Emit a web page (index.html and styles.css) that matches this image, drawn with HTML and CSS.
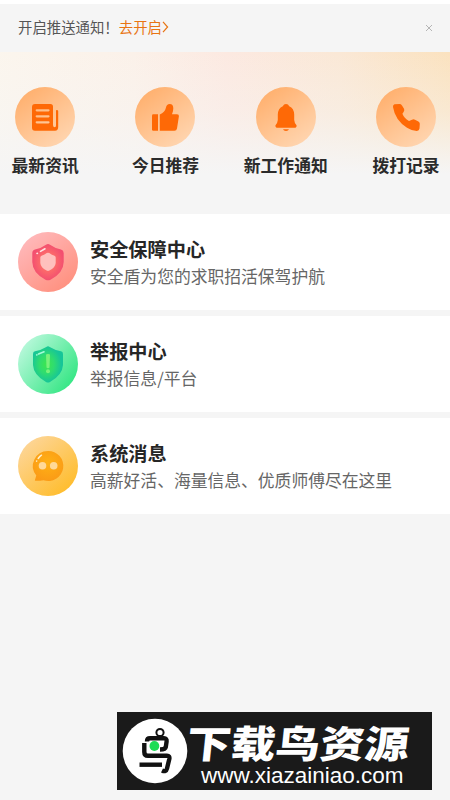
FILE: index.html
```html
<!DOCTYPE html>
<html lang="zh-CN">
<head>
  <meta charset="UTF-8">
  <meta name="viewport" content="width=device-width, initial-scale=1.0">
  <title>消息</title>
  <link rel="stylesheet" href="styles.css">
</head>
<body>

  <div class="notice">
    <span>开启推送通知！</span><a class="notice-link" href="#">去开启<svg width="7" height="12" viewBox="0 0 7 12"><path d="M1 .8L5.6 6L1 11.2" fill="none" stroke="#e87413" stroke-width="1.2"/></svg></a>
    <svg class="close" width="8" height="8" viewBox="0 0 8 8"><path d="M1 1L7 7M7 1L1 7" stroke="#b5b5b5" stroke-width="1"/></svg>
  </div>

  <div class="menu">
    <a class="menu-item" href="#">
      <div class="circle">
        <svg width="60" height="60" viewBox="0 0 60 60" fill="#fe6906">
          <path fill-rule="evenodd" d="M20 17H35.5Q38 17 38 19.5V38Q38 40.2 39.8 40.2Q41 40.2 41 38.5V23.5Q41 23 41.8 23Q43.2 23 43.2 24.2V40Q43.2 43.7 40 43.7H20Q17 43.7 17 40.7V20Q17 17 20 17ZM21.7 22.2A1 1 0 0 0 21.7 24.4H33.5A1 1 0 0 0 33.5 22.2ZM21.7 28.2A1 1 0 0 0 21.7 30.4H33.5A1 1 0 0 0 33.5 28.2ZM21.7 34.2A1 1 0 0 0 21.7 36.4H33.5A1 1 0 0 0 33.5 34.2Z"/>
        </svg>
      </div>
      <span>最新资讯</span>
    </a>
    <a class="menu-item" href="#">
      <div class="circle">
        <svg width="60" height="60" viewBox="0 0 60 60" fill="#fe6906">
          <path d="M18.3 27.2H23V43.7H18.3Q17 43.7 17 42.4V28.5Q17 27.2 18.3 27.2Z"/>
          <path d="M24.8 27.4Q29.8 25.8 31 20.5Q31.5 17 34.7 17Q38.3 17 38.3 21.3Q38.3 24.5 37 27.2H42Q44.2 27.2 43.9 29.3L42 41.5Q41.6 43.7 39.4 43.7H24.8Z"/>
        </svg>
      </div>
      <span>今日推荐</span>
    </a>
    <a class="menu-item" href="#">
      <div class="circle">
        <svg width="60" height="60" viewBox="0 0 60 60" fill="#fe6906">
          <path d="M30 17Q32.3 17 33.2 19.2Q38 21.3 38.2 27.5V33Q38.4 36 40.5 38.3Q41 39.5 40 40.2Q39.6 40.8 38.5 40.8H21.5Q20.4 40.8 20 40.2Q19 39.5 19.5 38.3Q21.6 36 21.8 33V27.5Q22 21.3 26.8 19.2Q27.7 17 30 17Z"/>
          <path d="M27 42.2H33Q32.3 44 30 44Q27.7 44 27 42.2Z"/>
        </svg>
      </div>
      <span>新工作通知</span>
    </a>
    <a class="menu-item" href="#">
      <div class="circle">
        <svg width="60" height="60" viewBox="0 0 60 60" fill="#fe6906">
          <path d="M18.5 17.2L23.5 17Q25 17 26 18.4L28 21.8Q28.8 23.4 27.6 25L26.4 26.7Q28 31 33 34L36 32.8Q37.5 32 39 32.7L42.4 34.4Q43.8 35.3 43.8 36.8L43.5 41.5Q43.2 43.8 40.8 44Q36 44 31 40.8Q19 33 17 20Q16.8 17.8 18.5 17.2Z"/>
        </svg>
      </div>
      <span>拨打记录</span>
    </a>
  </div>

  <div class="list">
    <div class="card">
      <svg width="60" height="60" viewBox="0 0 60 60">
        <defs>
          <linearGradient id="redBg" x1="0.1" y1="0.1" x2="0.8" y2="1"><stop offset="0" stop-color="#ffb9bb"/><stop offset="1" stop-color="#ff8f7d"/></linearGradient>
          <radialGradient id="redShield"><stop offset="0.3" stop-color="#ff7468"/><stop offset="1" stop-color="#f34f70"/></radialGradient>
        </defs>
        <circle cx="30" cy="30" r="30" fill="url(#redBg)"/>
        <path d="M28 12.7Q30 11.3 32 12.7Q36.5 16 43 17.5Q45.7 18.2 45.7 21V30Q45.5 41 32.5 47.7Q30 49 27.5 47.7Q14.5 41 14.3 30V21Q14.3 18.2 17 17.5Q23.5 16 28 12.7Z" fill="url(#redShield)"/>
        <path d="M28.8 21.1Q30 20.3 31.2 21.1Q34 23 36.5 23.8Q37.7 24.2 37.7 25.5V31Q37.3 35.5 31.4 38.6Q30 39.3 28.6 38.6Q22.7 35.5 22.3 31V25.5Q22.3 24.2 23.5 23.8Q26 23 28.8 21.1Z" fill="#ffc0bd"/>
        <path d="M22.5 19.4L27 16.8M19 21.5L19.4 21.3" stroke="#ffe3e2" stroke-width="1.6" stroke-linecap="round"/>
      </svg>
      <div class="card-text">
        <div class="card-title">安全保障中心</div>
        <div class="card-desc">安全盾为您的求职招活保驾护航</div>
      </div>
    </div>

    <div class="card">
      <svg width="60" height="60" viewBox="0 0 60 60">
        <defs>
          <linearGradient id="greenBg" x1="0.05" y1="0.2" x2="0.9" y2="0.85"><stop offset="0" stop-color="#b9f8db"/><stop offset="1" stop-color="#35e684"/></linearGradient>
          <radialGradient id="greenShield" cx="0.45" cy="0.5"><stop offset="0" stop-color="#3de64f"/><stop offset="0.5" stop-color="#2fdc70"/><stop offset="1" stop-color="#16c598"/></radialGradient>
        </defs>
        <circle cx="30" cy="30" r="30" fill="url(#greenBg)"/>
        <path d="M28.3 13Q30 11.7 31.7 13Q37 16.3 43 17.2Q45 17.5 45 20V31Q44.5 41 32 48Q30 49 28 48Q15.5 41 15 31V20Q15 17.5 17 17.2Q23 16.3 28.3 13Z" fill="url(#greenShield)"/>
        <path d="M28 20.8Q28 20 30 20Q32 20 32 20.8L31.5 33.5Q31.3 34.2 30 34.2Q28.7 34.2 28.5 33.5Z" fill="#79f27c"/>
        <circle cx="30" cy="37.2" r="2" fill="#79f27c"/>
        <path d="M20.5 20L26 17.8M18.7 21L18.9 20.9" stroke="#a6fbd8" stroke-width="1.6" stroke-linecap="round"/>
      </svg>
      <div class="card-text">
        <div class="card-title">举报中心</div>
        <div class="card-desc">举报信息/平台</div>
      </div>
    </div>

    <div class="card">
      <svg width="60" height="60" viewBox="0 0 60 60">
        <defs>
          <linearGradient id="yellowBg" x1="0.15" y1="0.1" x2="0.85" y2="0.9"><stop offset="0" stop-color="#fdd596"/><stop offset="1" stop-color="#ffbd2d"/></linearGradient>
          <radialGradient id="bubble" cx="0.5" cy="0.4" r="0.6"><stop offset="0" stop-color="#ffb115"/><stop offset="1" stop-color="#fb9b16"/></radialGradient>
        </defs>
        <circle cx="30" cy="30" r="30" fill="url(#yellowBg)"/>
        <path d="M30 15A15 15 0 1 1 25.5 44.2Q21.5 45 17.4 44.8Q16.5 44.6 17 43.8L18.3 39.5A15 15 0 0 1 30 15Z" fill="url(#bubble)"/>
        <circle cx="24.5" cy="29.7" r="3.8" fill="#ffd998"/>
        <circle cx="35.7" cy="29.7" r="3.8" fill="#ffd998"/>
        <path d="M20.2 22.5Q21.5 20.5 23.5 19.2M18.6 25.2L18.7 25" fill="none" stroke="#fff0cc" stroke-width="1.5" stroke-linecap="round"/>
      </svg>
      <div class="card-text">
        <div class="card-title">系统消息</div>
        <div class="card-desc">高薪好活、海量信息、优质师傅尽在这里</div>
      </div>
    </div>
  </div>

  <div class="banner">
    <svg width="66" height="66" viewBox="0 0 66 66">
      <circle cx="33" cy="33" r="32.3" fill="#fff"/>
      <g fill="none" stroke="#111" stroke-width="4.4">
        <circle cx="38" cy="14.5" r="3.6" stroke-width="2"/>
        <path d="M25 23.5Q25 20.3 28 20.3H42Q45 20.3 44.6 23.5L43.8 29Q43.3 31.5 38 31.5"/>
        <path d="M22.3 25V34Q22.3 37.8 26 37.8H45Q48 37.8 47.3 41L45 50.5Q44 54.5 40 52.5"/>
        <path d="M17.5 46.7H40"/>
      </g>
      <circle cx="32.4" cy="28" r="4.9" fill="#1ddc55"/>
    </svg>
    <div class="banner-text">
      <div class="banner-name">下载鸟资源</div>
      <div class="banner-url">www.xiazainiao.com</div>
    </div>
  </div>

</body>
</html>
```
FILE: styles.css
```css
* { box-sizing: border-box; margin: 0; padding: 0; }
body {
  font-family: "Noto Sans CJK SC", sans-serif;
  background-color: #f5f5f5;
  border-top: 4px solid #fff;
  height: 800px;
  display: flex;
  flex-direction: column;
  overflow: hidden;
}
a { text-decoration: none; color: inherit; }
svg { display: block; flex-shrink: 0; }

.notice {
  height: 48px;
  padding: 0 17px 3px 18px;
  display: flex; align-items: center;
  font-size: 14.4px; color: #555;
}
.notice-link {
  display: flex; align-items: center;
  color: #e87413;
}
.notice .close { margin-left: auto; margin-top: 3px; }

.menu {
  height: 161.5px;
  padding-top: 35px;
  display: grid;
  grid-template-columns: repeat(4, 120.3px);
  margin-left: -15px;
  background:
    linear-gradient(180deg, rgba(245,245,245,0) 0, rgba(245,245,245,0.35) 60px, #f5f5f5 122px),
    linear-gradient(90deg, #fbf6ee 0, #fbf1e9 32%, #fce9e1 52%, #fae8d6 76%, #fbe2bf 100%);
}
.menu-item {
  display: flex; flex-direction: column; align-items: center;
  font-size: 16.8px; font-weight: bold; color: #2b2b2b;
  line-height: 24px;
}
.circle {
  width: 60px; height: 60px;
  margin-bottom: 6px;
  border-radius: 50%;
  background: linear-gradient(145deg, #ffad69 5%, #ffd8b5 95%);
}

.list { display: flex; flex-direction: column; gap: 6px; }
.card {
  height: 96px;
  padding-left: 18px;
  display: flex; align-items: center; gap: 12px;
  background-color: #fff;
}
.card-title {
  font-size: 19.2px; font-weight: bold; line-height: 28px; color: #262626;
}
.card-desc {
  font-size: 16.8px; line-height: 26px; color: #666;
}

.banner {
  width: 315px; height: 78px;
  margin: auto 18px 10px auto;
  padding-left: 5px;
  display: flex; align-items: center;
  background-color: #1a1a1a;
  color: #fff;
}
.banner-text { width: 230px; white-space: nowrap; }
.banner-name {
  font-size: 38px; font-weight: 900; line-height: 40px;
  transform: skewX(-6deg) scaleX(1.17);
  transform-origin: left;
  margin: 9px 0 0 -1px;
}
.banner-url {
  font-family: "Liberation Sans", Arial, sans-serif;
  font-size: 22.5px; line-height: 27px;
  padding-left: 13px;
}
```
